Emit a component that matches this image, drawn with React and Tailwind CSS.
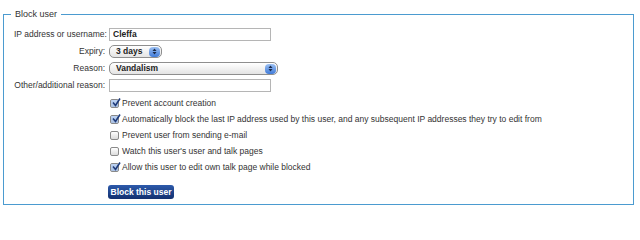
import { useState } from "react";

function Stepper() {
  return (
    <span className="ml-auto mr-[1px] flex h-[10px] w-[11px] items-center justify-center rounded-[4px] bg-gradient-to-b from-[#9cc0f2] to-[#3f7ad8]">
      <svg width="5" height="7" viewBox="0 0 5 7">
        <path d="M0.5 3 L2.5 0.5 L4.5 3 Z" fill="#1a2a4a" />
        <path d="M0.5 4 L2.5 6.5 L4.5 4 Z" fill="#1a2a4a" />
      </svg>
    </span>
  );
}

function Select({ value, width }) {
  return (
    <div
      className={`flex h-[13px] items-center rounded-[5px] border border-[#8e8e8e] bg-gradient-to-b from-white to-[#e4e4e4] pl-[6px] text-[8.5px] font-bold leading-[11px] text-[#222] ${width}`}
    >
      {value}
      <Stepper />
    </div>
  );
}

function Check({ checked, label }) {
  return (
    <label className="flex h-[16px] items-center gap-[3px] whitespace-nowrap">
      <span className="relative flex h-[9px] w-[9px] shrink-0 items-center justify-center rounded-[2px] border border-[#8a8a8a] bg-gradient-to-b from-white to-[#dcdcdc]">
        {checked && <span className="absolute inset-0 rounded-[1px] bg-[#7aa6e8] opacity-50" />}
        {checked && (
          <svg className="absolute -top-[2px] left-[1px]" width="9" height="9" viewBox="0 0 9 9">
            <path d="M1 4.5 L3.5 7.5 L8 0.5" stroke="#1f3b7a" strokeWidth="1.6" fill="none" />
          </svg>
        )}
      </span>
      <span>{label}</span>
    </label>
  );
}

export default function App() {
  const [user] = useState("Cleffa");
  return (
    <div className="h-[214px] w-[640px] bg-white pl-[3px] pr-[6px] pt-[8px] font-['Liberation_Sans',Arial,sans-serif] text-[8.5px] text-[#333]">
      <fieldset className="h-[197px] border border-[#4b9bd0] pl-[10px] pt-[8px]">
        <legend className="-ml-[3px] px-[4px] text-[9px] leading-[12px] text-[#333]">Block user</legend>
        <div className="grid grid-cols-[91px_auto] items-center gap-x-[4px] gap-y-[4px] leading-[13px]">
          <span className="whitespace-nowrap text-right">IP address or username:</span>
          <input
            value={user}
            readOnly
            className="h-[13px] w-[162px] border border-[#b5b5b5] px-[3px] text-[8.5px] font-bold text-[#222] outline-none"
          />
          <span className="whitespace-nowrap text-right">Expiry:</span>
          <Select value="3 days" width="w-[53px]" />
          <span className="whitespace-nowrap text-right">Reason:</span>
          <Select value="Vandalism" width="w-[169px]" />
          <span className="whitespace-nowrap text-right">Other/additional reason:</span>
          <input readOnly className="h-[13px] w-[162px] border border-[#b5b5b5] outline-none" />
        </div>
        <div className="ml-[96px] mt-[3px] flex flex-col items-start">
          <Check checked label="Prevent account creation" />
          <Check
            checked
            label="Automatically block the last IP address used by this user, and any subsequent IP addresses they try to edit from"
          />
          <Check label="Prevent user from sending e-mail" />
          <Check label="Watch this user's user and talk pages" />
          <Check checked label="Allow this user to edit own talk page while blocked" />
          <button className="-ml-[2px] mt-[10px] h-[14px] w-[66px] rounded-[3px] bg-gradient-to-b from-[#2d5aab] to-[#13306f] text-[8.5px] font-bold text-white">
            Block this user
          </button>
        </div>
      </fieldset>
    </div>
  );
}
